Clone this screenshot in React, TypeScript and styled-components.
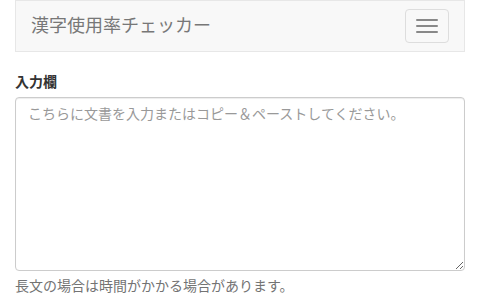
import * as React from 'react';
import styled, { createGlobalStyle } from 'styled-components';

const GlobalStyle = createGlobalStyle`
	* {
		box-sizing: border-box;
	}

	body {
		margin: 0;
		background: #fff;
		color: #333;
		font-family: "Liberation Sans", "Noto Sans CJK JP", sans-serif;
		font-size: 14px;
		line-height: 1.42857143;
	}
`;

const Container = styled.div`
	padding: 0 15px;
`;

const Navbar = styled.nav`
	display: flex;
	align-items: flex-start;
	justify-content: space-between;
	min-height: 52px;
	margin-bottom: 20px;
	background: #f8f8f8;
	border: 1px solid #e7e7e7;
`;

const Brand = styled.a`
	display: block;
	height: 50px;
	padding: 15px;
	font-size: 18px;
	line-height: 20px;
	color: #777;
	text-decoration: none;
`;

const Toggle = styled.button`
	display: flex;
	flex-direction: column;
	gap: 4px;
	margin: 8px 15px 8px 0;
	padding: 9px 10px;
	background: transparent;
	border: 1px solid #ddd;
	border-radius: 4px;
	cursor: pointer;
`;

const IconBar = styled.span`
	display: block;
	width: 22px;
	height: 2px;
	border-radius: 1px;
	background: #888;
`;

const FormGroup = styled.div`
	margin-bottom: 15px;
`;

const Label = styled.label`
	display: block;
	margin-bottom: 5px;
	font-weight: bold;
	color: #333;
`;

const TextArea = styled.textarea`
	display: block;
	width: 100%;
	height: 174px;
	padding: 6px 12px;
	font-family: inherit;
	font-size: 14px;
	line-height: 1.42857143;
	color: #555;
	background: #fff;
	border: 1px solid #ccc;
	border-radius: 4px;
	box-shadow: inset 0 1px 1px rgba(0, 0, 0, 0.075);
	resize: vertical;

	&::placeholder {
		color: #999;
	}
`;

const HelpBlock = styled.span`
	display: block;
	margin-top: 5px;
	color: #737373;
`;

export default function App() {
	return (
		<>
			<GlobalStyle />
			<Container>
				<Navbar>
					<Brand href="#">漢字使用率チェッカー</Brand>
					<Toggle type="button" aria-label="メニュー">
						<IconBar />
						<IconBar />
						<IconBar />
					</Toggle>
				</Navbar>
				<FormGroup>
					<Label htmlFor="input">入力欄</Label>
					<TextArea
						id="input"
						placeholder="こちらに文書を入力またはコピー＆ペーストしてください。"
					/>
					<HelpBlock>長文の場合は時間がかかる場合があります。</HelpBlock>
				</FormGroup>
			</Container>
		</>
	);
}
